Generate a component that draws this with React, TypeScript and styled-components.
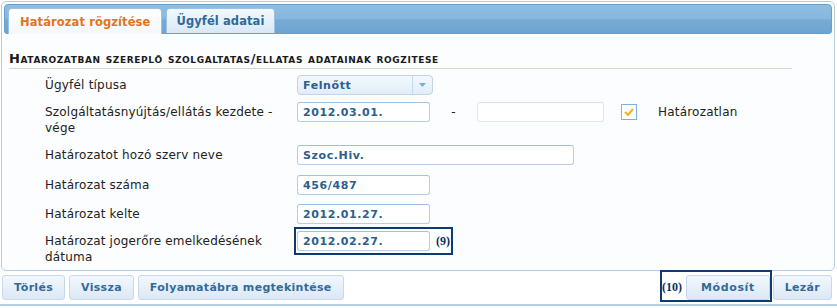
import React from "react";
import styled, { createGlobalStyle } from "styled-components";

const GlobalStyle = createGlobalStyle`
  body {
    margin: 0;
    background: #ffffff;
    font-family: "DejaVu Sans", Verdana, sans-serif;
  }
`;

const Page = styled.div`
  width: 837px;
  height: 308px;
  overflow: hidden;
  display: flex;
  flex-direction: column;
`;

const Panel = styled.div`
  margin: 1px 2px 0 1px;
  height: 270px;
  box-sizing: border-box;
  border: 1px solid #b2cee6;
  border-radius: 5px;
  padding: 2px;
  background: #fcfdfe;
  display: flex;
  flex-direction: column;
`;

const TabBar = styled.div`
  height: 30px;
  box-sizing: border-box;
  border: 1px solid #64a0d0;
  border-radius: 4px 4px 3px 3px;
  background: linear-gradient(#8fbee2 0%, #87b7dd 48%, #75aad5 55%, #6da5d2 100%);
  display: flex;
  align-items: flex-end;
  gap: 4px;
  padding-left: 3px;
`;

const Tab = styled.div<{ $active?: boolean }>`
  height: ${(p) => (p.$active ? "26px" : "25px")};
  margin-bottom: ${(p) => (p.$active ? "-1px" : "0")};
  box-sizing: border-box;
  border: 1px solid #9cc2e3;
  border-bottom: none;
  border-radius: 4px 4px 0 0;
  padding: 0 ${(p) => (p.$active ? "11px" : "9px")};
  display: flex;
  align-items: center;
  font-size: 11.5px;
  font-weight: bold;
  letter-spacing: 0.1px;
  color: ${(p) => (p.$active ? "#e2751c" : "#2d6a9c")};
  background: ${(p) =>
    p.$active
      ? "linear-gradient(#ffffff, #f4f8fb)"
      : "linear-gradient(#f3f8fd, #d9e8f5)"};
`;

const Content = styled.div`
  flex: 1;
  padding: 17px 0 0 5px;
`;

const Heading = styled.div`
  width: 783px;
  font-size: 13px;
  line-height: 16px;
  font-weight: bold;
  font-variant: small-caps;
  letter-spacing: 0.6px;
  color: #1a1a1a;
  padding-bottom: 1px;
  border-bottom: 1px solid #d9d5ca;
`;

const Form = styled.div`
  padding: 6px 0 0 36px;
  display: flex;
  flex-direction: column;
`;

const Row = styled.div<{ $space: number }>`
  display: flex;
  align-items: flex-start;
  margin-top: ${(p) => p.$space}px;
`;

const Label = styled.div`
  width: 252px;
  padding-top: 2px;
  font-size: 12px;
  line-height: 16px;
  color: #222222;
  letter-spacing: 0.2px;
`;

const Field = styled.div`
  display: flex;
  align-items: center;
`;

const Input = styled.div<{ $width: number; $empty?: boolean }>`
  width: ${(p) => p.$width}px;
  height: 20px;
  box-sizing: border-box;
  border: 1px solid ${(p) => (p.$empty ? "#dbe7f2" : "#b3cfe9")};
  border-top-color: ${(p) => (p.$empty ? "#d5e3f0" : "#9fc1e3")};
  border-radius: 3px;
  background: #ffffff;
  padding-left: 5px;
  display: flex;
  align-items: center;
  font-size: 11px;
  font-weight: bold;
  letter-spacing: 0.6px;
  color: #2b5f8e;
`;

const Select = styled.div`
  width: 136px;
  height: 20px;
  box-sizing: border-box;
  border: 1px solid #bed5ec;
  border-radius: 4px;
  background: linear-gradient(#f3f8fd, #e2edf8);
  display: flex;
  align-items: stretch;
`;

const SelectValue = styled.div`
  flex: 1;
  padding-left: 5px;
  display: flex;
  align-items: center;
  font-size: 11px;
  font-weight: bold;
  letter-spacing: 0.6px;
  color: #2b5f8e;
`;

const SelectArrow = styled.div`
  width: 19px;
  border-left: 1px solid #c6daee;
  display: flex;
  align-items: center;
  justify-content: center;
`;

const Dash = styled.span`
  width: 47px;
  text-align: center;
  font-size: 12px;
  color: #222222;
`;

const Check = styled.div`
  width: 16px;
  height: 16px;
  box-sizing: border-box;
  margin: 0 21px 0 17px;
  border: 1px solid #7eb0de;
  background: #ffffff;
  display: flex;
  align-items: center;
  justify-content: center;
`;

const CheckText = styled.span`
  font-size: 12px;
  color: #222222;
  letter-spacing: 0.2px;
`;

const Marker = styled.div`
  display: flex;
  align-items: center;
  border: 2px solid #0d3b70;
`;

const FieldMarker = styled(Marker)`
  margin: -4px 0 0 -3px;
  padding: 2px 1px 2px 1px;
  gap: 6px;
`;

const Note = styled.span`
  font-family: "Liberation Serif", "Times New Roman", serif;
  font-weight: bold;
  font-size: 12px;
  color: #0c2f5e;
`;

const ButtonBar = styled.div`
  margin-top: 4px;
  height: 31px;
  box-sizing: border-box;
  border-bottom: 2px solid #b6cfe4;
  padding: 0 5px 0 2px;
  display: flex;
  align-items: flex-start;
  gap: 4px;
`;

const Spacer = styled.div`
  flex: 1;
`;

const Button = styled.button`
  height: 25px;
  box-sizing: border-box;
  border: 1px solid #c7daec;
  border-radius: 3px;
  background: linear-gradient(#f2f8fd, #dbe8f5);
  padding: 0 11px;
  font-family: "DejaVu Sans", Verdana, sans-serif;
  font-size: 11px;
  font-weight: bold;
  letter-spacing: 0.3px;
  color: #336a9b;
`;

const ButtonMarker = styled(Marker)`
  margin-top: -5px;
  padding: 3px 0 0 0;
  gap: 4px;
  margin-right: -3px;
  & > ${Button} {
    padding: 0 14px;
    letter-spacing: 0.6px;
  }
`;

const rows = [
  { label: "Határozatot hozó szerv neve", value: "Szoc.Hiv.", width: 277, space: 9 },
  { label: "Határozat száma", value: "456/487", width: 133, space: 10 },
  { label: "Határozat kelte", value: "2012.01.27.", width: 133, space: 9 },
];

export default function App() {
  return (
    <Page>
      <GlobalStyle />
      <Panel>
        <TabBar>
          <Tab $active>Határozat rögzítése</Tab>
          <Tab>Ügyfél adatai</Tab>
        </TabBar>
        <Content>
          <Heading>Hatarozatban szereplő szolgaltatas/ellatas adatainak rogzitese</Heading>
          <Form>
            <Row $space={0}>
              <Label>Ügyfél típusa</Label>
              <Select>
                <SelectValue>Felnőtt</SelectValue>
                <SelectArrow>
                  <svg width="7" height="4" viewBox="0 0 7 4">
                    <path d="M0 0h7L3.5 4z" fill="#7ea9d4" />
                  </svg>
                </SelectArrow>
              </Select>
            </Row>
            <Row $space={7}>
              <Label>Szolgáltatásnyújtás/ellátás kezdete - vége</Label>
              <Field>
                <Input $width={133}>2012.03.01.</Input>
                <Dash>-</Dash>
                <Input $width={127} $empty />
                <Check>
                  <svg width="10" height="8" viewBox="0 0 10 8">
                    <path d="M1 4l3 3 5-6" stroke="#f2b21d" strokeWidth="2" fill="none" />
                  </svg>
                </Check>
                <CheckText>Határozatlan</CheckText>
              </Field>
            </Row>
            {rows.map((r) => (
              <Row key={r.label} $space={r.space}>
                <Label>{r.label}</Label>
                <Input $width={r.width}>{r.value}</Input>
              </Row>
            ))}
            <Row $space={7}>
              <Label>Határozat jogerőre emelkedésének dátuma</Label>
              <FieldMarker>
                <Input $width={133}>2012.02.27.</Input>
                <Note>(9)</Note>
              </FieldMarker>
            </Row>
          </Form>
        </Content>
      </Panel>
      <ButtonBar>
        <Button>Törlés</Button>
        <Button>Vissza</Button>
        <Button>Folyamatábra megtekintése</Button>
        <Spacer />
        <ButtonMarker>
          <Note>(10)</Note>
          <Button>Módosít</Button>
        </ButtonMarker>
        <Button>Lezár</Button>
      </ButtonBar>
    </Page>
  );
}
